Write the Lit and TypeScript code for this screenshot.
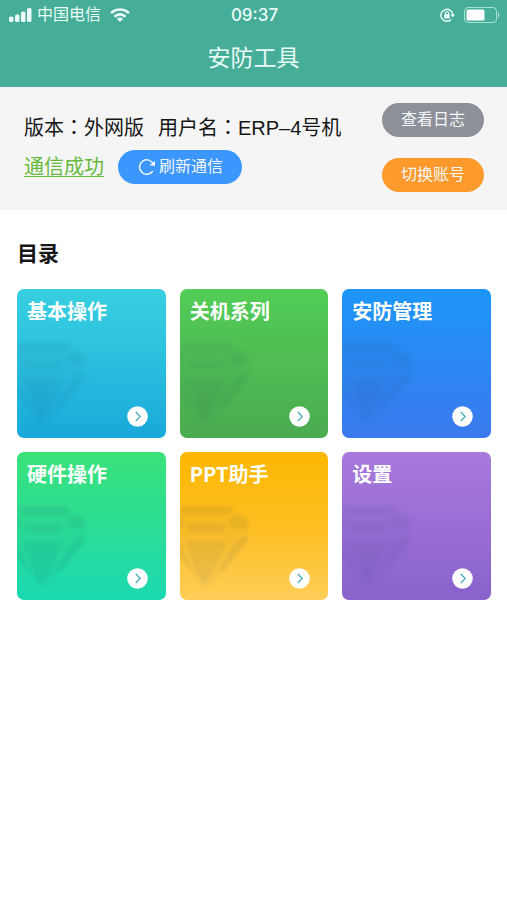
import { LitElement, html, css } from "lit";
import { customElement, property } from "lit/decorators.js";

interface Entry {
  title: string;
  tone: string;
}

const ENTRIES: Entry[] = [
  { title: "基本操作", tone: "cyan" },
  { title: "关机系列", tone: "green" },
  { title: "安防管理", tone: "blue" },
  { title: "硬件操作", tone: "mint" },
  { title: "PPT助手", tone: "amber" },
  { title: "设置", tone: "violet" },
];

@customElement("status-bar")
export class StatusBar extends LitElement {
  static styles = css`
    :host {
      display: grid;
      grid-template-columns: 1fr auto 1fr;
      align-items: center;
      height: 30px;
      padding: 0 7px 0 9px;
      color: #e9fbf6;
    }
    .side {
      display: flex;
      align-items: center;
      gap: 5px;
      font-size: 16px;
      line-height: 20px;
    }
    .carrier {
      margin-right: 4px;
    }
    .end {
      justify-content: flex-end;
      gap: 9px;
    }
    .time {
      font: 500 17px/20px Inter, "Liberation Sans", sans-serif;
    }
    svg {
      display: block;
      flex: none;
    }
  `;

  render() {
    return html`
      <div class="side">
        <svg width="23" height="14" viewBox="0 0 23 14" fill="currentColor" aria-hidden="true">
          <rect x="0" y="8.500" width="4.500" height="5.500" rx="1.500" />
          <rect x="6" y="6.500" width="4.500" height="7.500" rx="1.500" />
          <rect x="12" y="3.500" width="4.500" height="10.500" rx="1.500" />
          <rect x="18" y="0" width="4.500" height="14" rx="1.500" />
        </svg>
        <span class="carrier">中国电信</span>
        <svg width="20" height="14" viewBox="0 0 20 14" fill="none" stroke="currentColor" stroke-width="2.600" aria-hidden="true">
          <path d="M1 5.200 C6 0.200 14 0.200 19 5.200" />
          <path d="M4.500 8.700 C7.700 5.600 12.300 5.600 15.500 8.700" />
          <path d="M10 14 L6.900 10.800 C8.700 9.200 11.300 9.200 13.100 10.800 Z" fill="currentColor" stroke="none" />
        </svg>
      </div>
      <span class="time">09:37</span>
      <div class="side end">
        <svg width="15" height="14" viewBox="0 0 15 14" fill="none" stroke="currentColor" aria-hidden="true">
          <path d="M11.200 11.500 A6 6 0 1 1 12.900 7" stroke-width="1.400" />
          <path d="M10.600 6.600 H15 L12.800 9.600 Z" fill="currentColor" stroke="none" />
          <rect x="4.200" y="6.200" width="5.600" height="4.200" rx="0.500" fill="currentColor" stroke="none" />
          <path d="M5.400 6.500 V5.200 A1.600 1.600 0 0 1 8.600 5.200 V6.500" stroke-width="1.100" />
        </svg>
        <svg width="36" height="16" viewBox="0 0 36 16" aria-hidden="true">
          <rect x="0.500" y="0.500" width="32" height="15" rx="3.500" fill="none" stroke="#a5e3d3" />
          <rect x="2.500" y="2.500" width="18" height="11" rx="1.500" fill="#fff" />
          <path d="M34 5 C35.800 6 35.800 10 34 11 Z" fill="#a5e3d3" />
        </svg>
      </div>
    `;
  }
}

@customElement("entry-tile")
export class EntryTile extends LitElement {
  @property() label = "";
  @property() tone = "";

  static styles = css`
    :host {
      display: block;
    }
    .tile {
      position: relative;
      display: flex;
      flex-direction: column;
      justify-content: space-between;
      box-sizing: border-box;
      width: 100%;
      aspect-ratio: 1;
      padding: 8px 18px 11px 10px;
      border: 0;
      border-radius: 7px;
      overflow: hidden;
      color: #fff;
      font: inherit;
      text-align: left;
      cursor: pointer;
    }
    .cyan { background: linear-gradient(#38cfe0, #2bbfdf 50%, #18a8da); }
    .green { background: linear-gradient(#52cd57, #4bab50); }
    .blue { background: linear-gradient(#1c96f7, #3b7aee); }
    .mint { background: linear-gradient(#3ae279, #1bd8b1); }
    .amber { background: linear-gradient(#fdb700, #fdbe22 50%, #ffce58); }
    .violet { background: linear-gradient(#a979dc, #8a62cd); }
    .title {
      font-size: 20px;
      line-height: 28px;
      font-weight: 700;
    }
    .gem {
      position: absolute;
      left: 0;
      top: 52px;
      filter: blur(1px);
    }
    .cyan .gem,
    .green .gem,
    .blue .gem,
    .violet .gem {
      filter: blur(2px);
    }
    .go {
      align-self: flex-end;
      display: block;
    }
  `;

  render() {
    return html`
      <button type="button" class="tile ${this.tone}">
        <svg class="gem" width="72" height="84" viewBox="0 0 72 84" fill="#1a4a6a" aria-hidden="true">
          <path d="M0 2 H52 L69 20 L68 38 L32 80 Q26 84 20 80 L0 54 Z" fill-opacity="0.030" />
          <g fill-opacity="0.060">
            <path d="M3 2 H48 Q52 2 52 6 Q52 11 47 11 H8 Q3 11 1 6 Z" />
            <rect x="8" y="19" width="37" height="10" rx="3" />
            <ellipse cx="59" cy="18" rx="10" ry="7" />
            <path d="M0 12 Q4 15 4 19 Q3 24 0 25 Z" />
            <path d="M10 37 H43 Q48 37 45 42 L28 76 Q24 84 20 76 L7 42 Q5 37 10 37 Z" />
            <path d="M66 33 Q70 34 66 40 L44 67 L38 66 L54 40 Q58 33 66 33 Z" />
            <path d="M0 38 L14 70 L0 52 Z" />
          </g>
        </svg>
        <span class="title">${this.label}</span>
        <svg class="go" width="21" height="21" viewBox="0 0 21 21" aria-hidden="true">
          <circle cx="10.500" cy="10.500" r="10.300" fill="#fff" />
          <path d="M8.800 6 L13.200 10.500 L8.800 15" fill="none" stroke="#4aaebb" stroke-width="1.300" />
        </svg>
      </button>
    `;
  }
}

@customElement("app-root")
export class AppRoot extends LitElement {
  static styles = css`
    :host {
      display: block;
      min-height: 100vh;
      background: #fff;
      color: #161616;
      font-family: "Liberation Sans", "Noto Sans CJK SC", sans-serif;
    }
    header {
      background: #46ad98;
    }
    h1 {
      margin: 0;
      padding: 12px 0 13px;
      color: #e9fbf6;
      font-size: 23px;
      line-height: 32px;
      font-weight: 400;
      text-align: center;
    }
    .info {
      display: flex;
      justify-content: space-between;
      padding: 16px 23px 18px 24px;
      background: #f5f5f5;
    }
    .details {
      display: flex;
      flex-direction: column;
      gap: 8px;
      padding-top: 10px;
      font-size: 20px;
      line-height: 28px;
    }
    .line {
      display: flex;
      align-items: center;
      gap: 14px;
      white-space: nowrap;
    }
    .colon {
      font-family: "Noto Sans CJK TC", sans-serif;
    }
    .state {
      color: #67b93c;
      text-decoration: underline;
      text-decoration-thickness: 1px;
      text-underline-offset: 2px;
    }
    .actions {
      display: flex;
      flex-direction: column;
      gap: 21px;
    }
    .pill {
      display: flex;
      align-items: center;
      justify-content: center;
      gap: 2px;
      height: 34px;
      padding: 0 19px;
      border: 0;
      border-radius: 17px;
      color: #f3f6fa;
      font: inherit;
      font-size: 16px;
      line-height: 24px;
      font-weight: 400;
      cursor: pointer;
    }
    .refresh { background: #3b97fd; }
    .log { background: #8d9098; }
    .switch { background: #fd9a2b; }
    h2 {
      margin: 0;
      font-size: 21px;
      line-height: 30px;
      font-weight: 700;
    }
    main {
      display: flex;
      flex-direction: column;
      gap: 20px;
      padding: 29px 16px 28px 17px;
    }
    .grid {
      display: grid;
      grid-template-columns: repeat(3, 1fr);
      gap: 14px;
    }
    .entries {
      font-family: "Noto Sans CJK SC", sans-serif;
    }
  `;

  render() {
    return html`
      <header>
        <status-bar></status-bar>
        <h1>安防工具</h1>
      </header>
      <section class="info">
        <div class="details">
          <div class="line">
            <span>版本<span class="colon">：</span>外网版</span>
            <span>用户名<span class="colon">：</span>ERP–4号机</span>
          </div>
          <div class="line">
            <a class="state" href="#status">通信成功</a>
            <button type="button" class="pill refresh">
              <svg width="20" height="18" viewBox="0 0 20 18" fill="none" stroke="currentColor" stroke-width="1.500" aria-hidden="true">
                <path d="M15.800 13 A7.200 7.200 0 1 1 16.400 6.200" />
                <path d="M18 3 V8 L12.500 7.200 Z" fill="currentColor" stroke="none" />
              </svg>
              <span>刷新通信</span>
            </button>
          </div>
        </div>
        <div class="actions">
          <button type="button" class="pill log">查看日志</button>
          <button type="button" class="pill switch">切换账号</button>
        </div>
      </section>
      <main>
        <h2>目录</h2>
        <div class="grid entries">
          ${ENTRIES.map((e) => html`<entry-tile .label=${e.title} .tone=${e.tone}></entry-tile>`)}
        </div>
      </main>
    `;
  }
}
